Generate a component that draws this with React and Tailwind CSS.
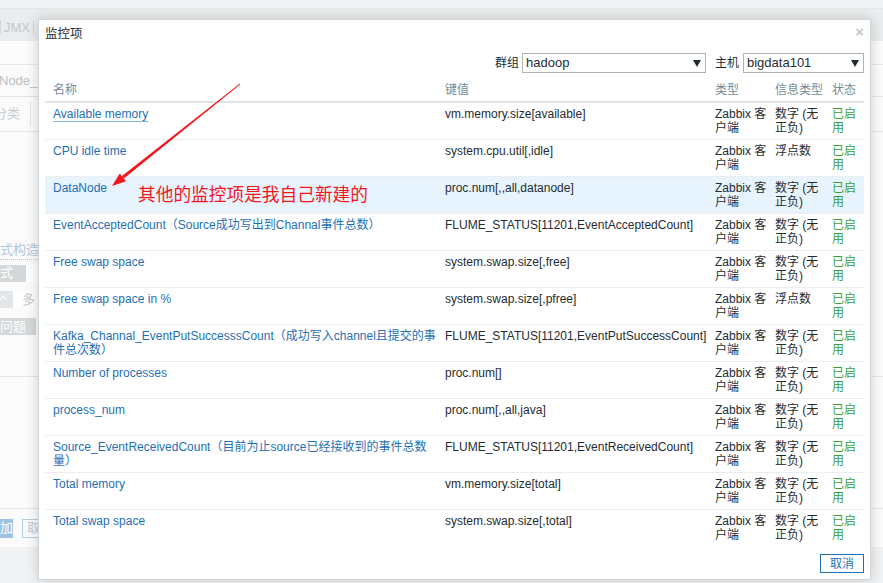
import React from "react";

const FONT = { fontFamily: '"Liberation Sans", "Noto Sans CJK SC", sans-serif' };

const rows = [
  { name: "Available memory", key: "vm.memory.size[available]", info: ["数字 (无", "正负)"], underline: true },
  { name: "CPU idle time", key: "system.cpu.util[,idle]", info: ["浮点数"] },
  { name: "DataNode", key: "proc.num[,,all,datanode]", info: ["数字 (无", "正负)"], hl: true },
  { name: "EventAcceptedCount（Source成功写出到Channal事件总数）", key: "FLUME_STATUS[11201,EventAcceptedCount]", info: ["数字 (无", "正负)"] },
  { name: "Free swap space", key: "system.swap.size[,free]", info: ["数字 (无", "正负)"] },
  { name: "Free swap space in %", key: "system.swap.size[,pfree]", info: ["浮点数"] },
  { name: ["Kafka_Channal_EventPutSuccesssCount（成功写入channel且提交的事", "件总次数）"], key: "FLUME_STATUS[11201,EventPutSuccessCount]", info: ["数字 (无", "正负)"] },
  { name: "Number of processes", key: "proc.num[]", info: ["数字 (无", "正负)"] },
  { name: "process_num", key: "proc.num[,,all,java]", info: ["数字 (无", "正负)"] },
  { name: ["Source_EventReceivedCount（目前为止source已经接收到的事件总数", "量）"], key: "FLUME_STATUS[11201,EventReceivedCount]", info: ["数字 (无", "正负)"] },
  { name: "Total memory", key: "vm.memory.size[total]", info: ["数字 (无", "正负)"] },
  { name: "Total swap space", key: "system.swap.size[,total]", info: ["数字 (无", "正负)"] },
];

function Lines({ parts }) {
  const arr = Array.isArray(parts) ? parts : [parts];
  return arr.map((p, i) => (
    <div key={i} className="whitespace-nowrap">{p}</div>
  ));
}

function Caret() {
  return (
    <svg width="8" height="7" viewBox="0 0 8 7" className="shrink-0">
      <polygon points="0,0 8,0 4,7" fill="#1f2c33" />
    </svg>
  );
}

function Select({ value, width }) {
  return (
    <div
      className="flex h-[20px] items-center justify-between border border-[#a9b4b9] bg-white pl-[3px] pr-[4px] text-[13px] text-[#1f2c33]"
      style={{ width }}
    >
      <span>{value}</span>
      <Caret />
    </div>
  );
}

function Background() {
  return (
    <div className="flex h-full w-full flex-col bg-[#f8f9f9] text-[12px] text-[#c3c8cb]">
      <div className="h-[8px] bg-[#f1f2f3]" />
      <div className="flex h-[33px] items-end border-t border-[#e3e5e6] bg-[#ebeced] pb-[7px]">
        <div className="flex h-[14px] items-center border-x border-[#d5d8da] px-[3px] text-[13px] leading-none text-[#c5c9cc]">JMX</div>
      </div>
      <div className="h-[24px] border-b border-[#e6e8e9] bg-[#fbfbfb]" />
      <div className="flex h-[32px] items-center border-b border-[#e2e4e5] bg-[#fbfbfb] text-[13px] text-[#b7c0c6]">
        <span className="-ml-[1px]">Node_</span>
      </div>
      <div className="flex h-[35px] items-center border-b border-[#e2e4e5] bg-[#fbfbfb]">
        <div className="flex h-[24px] items-center border-r border-[#e2e4e5] pr-[10px] text-[13px] text-[#c8cdd0]">
          <span className="-ml-[6px]">分类</span>
        </div>
        <span className="ml-[8px] text-[#d8dbdd]">信</span>
      </div>
      <div className="h-[108px] bg-[#fbfbfb]" />
      <div className="flex h-[20px] items-center bg-[#fbfbfb] text-[13px]">
        <span className="border-b border-dotted border-[#b9cbe0] text-[#b2c6dc]">式构造器</span>
      </div>
      <div className="flex h-[26px] items-center bg-[#fbfbfb]">
        <div className="flex h-[17px] w-[26px] items-center bg-[#d4d8db] text-[13px] text-white">式</div>
        <div className="h-[17px] w-[12px] bg-white" />
      </div>
      <div className="flex h-[27px] items-center bg-[#fbfbfb]">
        <div className="flex h-[17px] w-[13px] items-center bg-[#e3e6e8] text-[13px] text-white">^</div>
        <div className="flex h-[17px] items-center bg-white pl-[9px] text-[13px] text-[#c5c9cc]">多</div>
      </div>
      <div className="flex h-[27px] items-center bg-[#fbfbfb]">
        <div className="flex h-[17px] w-[36px] items-center bg-[#d4d8db] text-[13px] text-white">问题</div>
      </div>
      <div className="h-[37px] border-b border-[#e2e4e5] bg-[#fbfbfb]" />
      <div className="h-[132px] border-b border-[#e2e4e5] bg-[#fbfbfb]" />
      <div className="flex h-[38px] items-center gap-[9px] bg-[#fbfbfb]">
        <div className="flex h-[19px] w-[13px] items-center justify-end bg-[#9fc3e2] text-[13px] text-white">加</div>
        <div className="flex h-[19px] w-[30px] items-center border border-[#b6cde2] pl-[4px] text-[13px] text-[#b6cde2]">取</div>
      </div>
      <div className="flex-1 bg-[#f1f2f3]" />
    </div>
  );
}

function Modal() {
  return (
    <div className="absolute left-[38px] top-[19px] flex h-[561px] w-[833px] flex-col border border-[#cfd6d9] bg-white px-[6px] shadow-[0_0_12px_rgba(0,0,0,0.18)]">
      <div className="mt-[7px] flex h-[14px] items-center justify-between pl-[0px] pr-[0px]">
        <span className="text-[12.5px] leading-[14px] text-[#1f2c33]">监控项</span>
        <span className="-mt-[6px] text-[15px] font-bold leading-none text-[#c2c7ca]">×</span>
      </div>
      <div className="mt-[12px] flex h-[20px] items-center justify-end text-[12px] text-[#1f2c33]">
        <span className="mr-[3px]">群组</span>
        <Select value="hadoop" width={184} />
        <span className="ml-[9px] mr-[4px]">主机</span>
        <Select value="bigdata101" width={121} />
      </div>
      <table className="mt-[6px] w-[819px] table-fixed border-collapse text-[12px] leading-[14px]">
        <colgroup>
          <col className="w-[392px]" />
          <col className="w-[270px]" />
          <col className="w-[60px]" />
          <col className="w-[57px]" />
          <col className="w-[40px]" />
        </colgroup>
        <thead>
          <tr className="border-b-2 border-[#dfe4e7] text-left text-[#768d99]">
            <th className="py-[4px] pl-[8px] font-normal">名称</th>
            <th className="py-[4px] pl-[8px] font-normal">键值</th>
            <th className="py-[4px] pl-[8px] font-normal">类型</th>
            <th className="py-[4px] pl-[8px] font-normal">信息类型</th>
            <th className="py-[4px] pl-[8px] font-normal">状态</th>
          </tr>
        </thead>
        <tbody>
          {rows.map((r, i) => (
            <tr
              key={i}
              className={
                (i < rows.length - 1 ? "border-b border-[#ebeef0] " : "") +
                (r.hl ? "bg-[#e8f4fd]" : "bg-white")
              }
            >
              <td className="h-[36px] py-[4px] pl-[8px] align-top text-[#1f6fb5]">
                {r.underline ? (
                  <span className="underline decoration-[#86b5dd] underline-offset-[3px]">{r.name}</span>
                ) : (
                  <Lines parts={r.name} />
                )}
              </td>
              <td className="py-[4px] pl-[8px] align-top whitespace-nowrap text-[#1f2c33]">{r.key}</td>
              <td className="py-[4px] pl-[8px] align-top text-[#1f2c33]">
                <Lines parts={["Zabbix 客", "户端"]} />
              </td>
              <td className="py-[4px] pl-[8px] align-top text-[#1f2c33]">
                <Lines parts={r.info} />
              </td>
              <td className="py-[4px] pl-[8px] align-top text-[#3a9f3a]">
                <Lines parts={["已启", "用"]} />
              </td>
            </tr>
          ))}
        </tbody>
      </table>
      <div className="mt-[8px] flex justify-end">
        <div className="flex h-[19px] w-[44px] items-center justify-center border border-[#1f6fb5] text-[12px] text-[#1f6fb5]">取消</div>
      </div>
    </div>
  );
}

function Annotation() {
  return (
    <>
      <svg className="pointer-events-none absolute left-0 top-0" width="883" height="583" viewBox="0 0 883 583">
        <polygon points="240.4,84.3 239.6,83.7 122.0,176.1 123.8,178.5" fill="#f5161b" />
        <polygon points="112,186 126.0,181.2 119.8,173.4" fill="#f5161b" />
      </svg>
      <div className="pointer-events-none absolute left-[138px] top-[183px] text-[17.7px] leading-[24px] text-[#f5161b]">
        其他的监控项是我自己新建的
      </div>
    </>
  );
}

export default function App() {
  return (
    <div className="relative h-[583px] w-[883px] overflow-hidden" style={FONT}>
      <Background />
      <Modal />
      <Annotation />
    </div>
  );
}
